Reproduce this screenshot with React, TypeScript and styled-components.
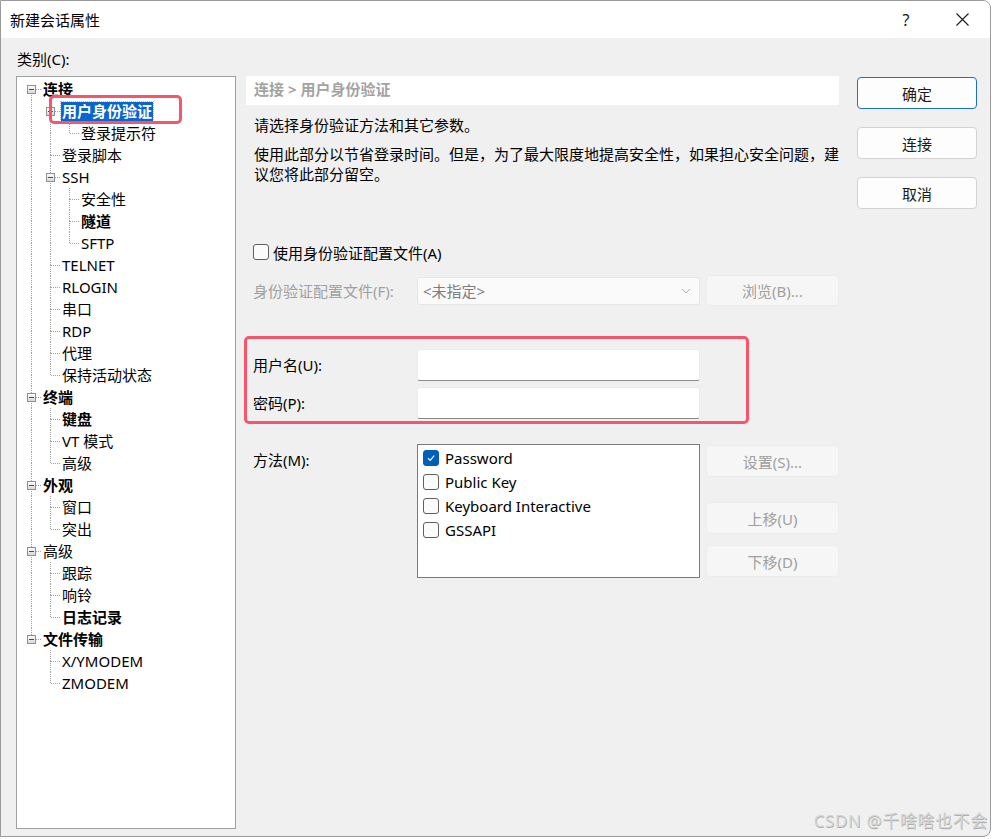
import React from 'react';
import styled, { createGlobalStyle } from 'styled-components';

const GlobalStyle = createGlobalStyle`
  html, body {
    margin: 0;
    padding: 0;
    background: #ffffff;
  }
  body {
    font-family: "Noto Sans", "Noto Sans CJK SC", sans-serif;
    font-size: 15px;
    color: #000000;
  }
  * {
    box-sizing: border-box;
  }
`;

/* ---------- window frame ---------- */

const Window = styled.div`
  position: relative;
  width: 991px;
  height: 837px;
  border: 1px solid #9b9b9b;
  border-radius: 0 8px 8px 0;
  background: #f0f0f0;
  overflow: hidden;
  display: flex;
  flex-direction: column;
`;

const TitleBar = styled.div`
  display: flex;
  align-items: center;
  height: 37px;
  padding-left: 9px;
  background: #ffffff;
`;

const Title = styled.div`
  flex: 1;
  font-size: 15px;
  line-height: 20px;
`;

const TitleButton = styled.div`
  width: 56px;
  height: 37px;
  display: flex;
  align-items: center;
  justify-content: center;
  font-size: 16px;
  color: #1a1a1a;
`;

const Body = styled.div`
  flex: 1;
  display: flex;
  padding: 10px 0 0 15px;
`;

/* ---------- category tree ---------- */

const LeftColumn = styled.div`
  width: 220px;
  display: flex;
  flex-direction: column;
`;

const CategoryLabel = styled.div`
  height: 22px;
  line-height: 22px;
  padding-left: 1px;
  margin-bottom: 6px;
`;

const TreeBox = styled.div`
  height: 753px;
  border: 1px solid #a0a0a0;
  background: #ffffff;
  padding: 1px 0 0 5px;
`;

const TreeRow = styled.div`
  position: relative;
  display: flex;
  align-items: center;
  height: 22px;
`;

const TreeText = styled.span<{ $bold?: boolean; $selected?: boolean }>`
  margin-left: 1px;
  padding: 0 1px;
  font-size: 15px;
  line-height: 19px;
  white-space: nowrap;
  font-weight: ${(p) => (p.$bold ? 700 : 400)};
  color: ${(p) => (p.$selected ? '#ffffff' : '#000000')};
  background: ${(p) => (p.$selected ? '#0a66cc' : 'transparent')};
  outline: ${(p) => (p.$selected ? '1px dotted #9cc4f0' : 'none')};
`;

const Annotation = styled.div`
  position: absolute;
  left: 27px;
  top: -5px;
  width: 133px;
  height: 29px;
  border: 3px solid #f6566b;
  border-radius: 5px;
  pointer-events: none;
`;

/* ---------- content panel ---------- */

const Content = styled.div`
  width: 593px;
  margin: 28px 0 0 10px;
  display: flex;
  flex-direction: column;
`;

const PageHeader = styled.div`
  height: 29px;
  line-height: 27px;
  padding-left: 8px;
  background: #ffffff;
  color: #a3a3a3;
  font-weight: 700;
`;

const Paragraph = styled.p<{ $top: number }>`
  margin: ${(p) => p.$top}px 0 0;
  padding-left: 8px;
  line-height: 20px;
`;

const Line = styled.span`
  display: block;
  white-space: nowrap;
`;

const CheckRow = styled.label`
  display: flex;
  align-items: center;
  gap: 4px;
  height: 20px;
  margin-top: 58px;
  padding-left: 7px;
`;

const Box = styled.span<{ $checked?: boolean }>`
  width: 16px;
  height: 16px;
  flex: none;
  display: flex;
  align-items: center;
  justify-content: center;
  border-radius: 3px;
  border: 1px solid ${(p) => (p.$checked ? '#005fb8' : '#5f5f5f')};
  background: ${(p) => (p.$checked ? '#005fb8' : '#fbfbfb')};
`;

const FormRow = styled.div<{ $top?: number }>`
  display: flex;
  align-items: center;
  margin-top: ${(p) => p.$top ?? 0}px;
`;

const FieldLabel = styled.div<{ $muted?: boolean; $width?: number }>`
  width: ${(p) => p.$width ?? 171}px;
  padding-left: ${(p) => (p.$width ? 6 : 7)}px;
  color: ${(p) => (p.$muted ? '#a0a0a0' : '#000000')};
  line-height: 22px;
  white-space: nowrap;
`;

const Combo = styled.div`
  width: 283px;
  height: 28px;
  display: flex;
  align-items: center;
  justify-content: space-between;
  padding: 0 8px 0 5px;
  border: 1px solid #e6e6e6;
  border-radius: 3px;
  background: #fafafa;
  color: #7d7d7d;
`;

const TextInput = styled.input`
  width: 283px;
  height: 32px;
  border: 1px solid #ececec;
  border-bottom: 1px solid #8a8a8a;
  border-radius: 3px;
  background: #ffffff;
  outline: none;
  font: inherit;
`;

const Highlight = styled.div`
  width: 505px;
  height: 88px;
  margin: 30px 0 0 -2px;
  padding-top: 10px;
  border: 3px solid #f6566b;
  border-radius: 5px;
  display: flex;
  flex-direction: column;
  gap: 6px;
`;

const MethodRow = styled.div`
  display: flex;
  align-items: flex-start;
  margin-top: 20px;
`;

const MethodLabel = styled(FieldLabel)`
  padding-top: 5px;
`;

const ListBox = styled.div`
  width: 283px;
  height: 134px;
  padding: 1px 0 0 5px;
  border: 1px solid #7a7a7a;
  background: #ffffff;
`;

const ListItem = styled.div`
  display: flex;
  align-items: center;
  gap: 6px;
  height: 24px;
`;

const SideButtons = styled.div`
  display: flex;
  flex-direction: column;
  margin-left: 6px;
`;

const Button = styled.div<{ $disabled?: boolean; $primary?: boolean; $width?: number; $height?: number; $top?: number }>`
  width: ${(p) => p.$width ?? 133}px;
  height: ${(p) => p.$height ?? 32}px;
  margin-top: ${(p) => p.$top ?? 0}px;
  display: flex;
  align-items: center;
  justify-content: center;
  border-radius: 4px;
  border: 1px solid
    ${(p) => (p.$primary ? '#1a6fd0' : p.$disabled ? '#ececec' : '#d2d2d2')};
  background: ${(p) => (p.$disabled ? '#f6f6f6' : '#fdfdfd')};
  color: ${(p) => (p.$disabled ? '#a0a0a0' : '#1a1a1a')};
  flex: none;
`;

const BrowseButton = styled(Button)`
  margin-left: 6px;
`;

/* ---------- dialog buttons ---------- */

const DialogButtons = styled.div`
  width: 120px;
  margin: 29px 0 0 18px;
  display: flex;
  flex-direction: column;
  gap: 18px;
`;

const Watermark = styled.div`
  position: absolute;
  right: 2px;
  bottom: 4px;
  font-size: 17px;
  color: #d4d4d4;
  text-shadow: 0.5px 0.5px 0.5px #acacac;
  letter-spacing: 0.6px;
`;

/* ---------- tree data ---------- */

type TreeNode = {
  label: string;
  level: number;
  bold?: boolean;
  expand?: boolean;
  selected?: boolean;
};

const tree: TreeNode[] = [
  { label: '连接', level: 0, bold: true, expand: true },
  { label: '用户身份验证', level: 1, bold: true, expand: true, selected: true },
  { label: '登录提示符', level: 2 },
  { label: '登录脚本', level: 1 },
  { label: 'SSH', level: 1, expand: true },
  { label: '安全性', level: 2 },
  { label: '隧道', level: 2, bold: true },
  { label: 'SFTP', level: 2 },
  { label: 'TELNET', level: 1 },
  { label: 'RLOGIN', level: 1 },
  { label: '串口', level: 1 },
  { label: 'RDP', level: 1 },
  { label: '代理', level: 1 },
  { label: '保持活动状态', level: 1 },
  { label: '终端', level: 0, bold: true, expand: true },
  { label: '键盘', level: 1, bold: true },
  { label: 'VT 模式', level: 1 },
  { label: '高级', level: 1 },
  { label: '外观', level: 0, bold: true, expand: true },
  { label: '窗口', level: 1 },
  { label: '突出', level: 1 },
  { label: '高级', level: 0, expand: true },
  { label: '跟踪', level: 1 },
  { label: '响铃', level: 1 },
  { label: '日志记录', level: 1, bold: true },
  { label: '文件传输', level: 0, bold: true, expand: true },
  { label: 'X/YMODEM', level: 1 },
  { label: 'ZMODEM', level: 1 },
];

// is there another node at `level` further down, before the branch closes?
const continues = (index: number, level: number) => {
  for (let j = index + 1; j < tree.length; j++) {
    if (tree[j].level < level) return false;
    if (tree[j].level === level) return true;
  }
  return false;
};

const DOT = { stroke: '#a0a0a0', strokeWidth: 1, strokeDasharray: '1 1' };

const Guide = ({ up, down, elbow, box }: { up?: boolean; down?: boolean; elbow?: boolean; box?: boolean }) => (
  <svg width="19" height="22" viewBox="0 0 19 22" shapeRendering="crispEdges" style={{ flex: 'none' }}>
    {up && <line x1="9.5" y1="0" x2="9.5" y2="11" {...DOT} />}
    {down && <line x1="9.5" y1="11" x2="9.5" y2="22" {...DOT} />}
    {elbow && <line x1="10" y1="11.5" x2="19" y2="11.5" {...DOT} />}
    {box && (
      <>
        <defs>
          <linearGradient id="bx" x1="0" y1="0" x2="0" y2="1">
            <stop offset="0" stopColor="#ffffff" />
            <stop offset="1" stopColor="#d6d6d6" />
          </linearGradient>
        </defs>
        <rect x="5.5" y="7.5" width="8" height="8" fill="url(#bx)" stroke="#8f8f8f" />
        <line x1="7" y1="11.5" x2="12" y2="11.5" stroke="#2f4f8f" />
      </>
    )}
  </svg>
);

const Tree = () => (
  <TreeBox>
    {tree.map((node, i) => {
      const guides = [];
      for (let k = 0; k < node.level; k++) {
        guides.push(<Guide key={k} up={continues(i, k)} down={continues(i, k)} />);
      }
      guides.push(
        <Guide key="own" up={i !== 0} down={continues(i, node.level)} elbow box={node.expand} />,
      );
      return (
        <TreeRow key={i}>
          {guides}
          <TreeText $bold={node.bold} $selected={node.selected}>
            {node.label}
          </TreeText>
          {node.selected && <Annotation />}
        </TreeRow>
      );
    })}
  </TreeBox>
);

const Check = () => (
  <svg width="10" height="10" viewBox="0 0 10 10">
    <polyline points="2,5.2 4.2,7.4 8.2,2.6" fill="none" stroke="#ffffff" strokeWidth="1.2" />
  </svg>
);

const Chevron = () => (
  <svg width="10" height="6" viewBox="0 0 10 6">
    <polyline points="1,1 5,5 9,1" fill="none" stroke="#b0b0b0" strokeWidth="1" />
  </svg>
);

const methods = [
  { label: 'Password', checked: true },
  { label: 'Public Key' },
  { label: 'Keyboard Interactive' },
  { label: 'GSSAPI' },
];

const App = () => (
  <>
    <GlobalStyle />
    <Window>
      <TitleBar>
        <Title>新建会话属性</Title>
        <TitleButton>?</TitleButton>
        <TitleButton>
          <svg width="13" height="13" viewBox="0 0 13 13">
            <path d="M0.5 0.5 L12.5 12.5 M12.5 0.5 L0.5 12.5" stroke="#1a1a1a" strokeWidth="1.1" />
          </svg>
        </TitleButton>
      </TitleBar>

      <Body>
        <LeftColumn>
          <CategoryLabel>类别(C):</CategoryLabel>
          <Tree />
        </LeftColumn>

        <Content>
          <PageHeader>连接 &gt; 用户身份验证</PageHeader>
          <Paragraph $top={10}>请选择身份验证方法和其它参数。</Paragraph>
          <Paragraph $top={9}>
            <Line>使用此部分以节省登录时间。但是，为了最大限度地提高安全性，如果担心安全问题，建</Line>
            <Line>议您将此部分留空。</Line>
          </Paragraph>

          <CheckRow>
            <Box />
            使用身份验证配置文件(A)
          </CheckRow>

          <FormRow $top={13}>
            <FieldLabel $muted>身份验证配置文件(F):</FieldLabel>
            <Combo>
              &lt;未指定&gt;
              <Chevron />
            </Combo>
            <BrowseButton $disabled $height={31}>
              浏览(B)...
            </BrowseButton>
          </FormRow>

          <Highlight>
            <FormRow>
              <FieldLabel $width={170}>用户名(U):</FieldLabel>
              <TextInput />
            </FormRow>
            <FormRow>
              <FieldLabel $width={170}>密码(P):</FieldLabel>
              <TextInput type="password" />
            </FormRow>
          </Highlight>

          <MethodRow>
            <MethodLabel>方法(M):</MethodLabel>
            <ListBox>
              {methods.map((m) => (
                <ListItem key={m.label}>
                  <Box $checked={m.checked}>{m.checked && <Check />}</Box>
                  {m.label}
                </ListItem>
              ))}
            </ListBox>
            <SideButtons>
              <Button $disabled $top={1}>设置(S)...</Button>
              <Button $disabled $top={25}>上移(U)</Button>
              <Button $disabled $top={11}>下移(D)</Button>
            </SideButtons>
          </MethodRow>
        </Content>

        <DialogButtons>
          <Button $primary $width={120}>确定</Button>
          <Button $width={120}>连接</Button>
          <Button $width={120}>取消</Button>
        </DialogButtons>
      </Body>

      <Watermark>CSDN @千啥啥也不会</Watermark>
    </Window>
  </>
);

export default App;
